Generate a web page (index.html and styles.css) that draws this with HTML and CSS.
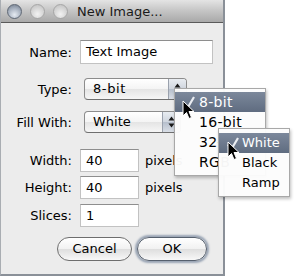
FILE: index.html
```html
<!DOCTYPE html>
<html>
<head>
<meta charset="utf-8">
<link rel="stylesheet" href="styles.css">
</head>
<body>
<div class="window">
  <div class="titlebar">
    <span class="light graphite"></span>
    <span class="light"></span>
    <span class="light"></span>
    <span class="title">New Image...</span>
  </div>
  <div class="content">
    <div class="row row-name">
      <span class="label">Name:</span>
      <div class="field field-name">Text Image</div>
    </div>
    <div class="row row-type">
      <span class="label">Type:</span>
      <div class="popup popup-type"><span class="popup-text">8-bit</span><span class="arrows"><svg width="7" height="12" viewBox="0 0 7 12"><path d="M3.5 0.5 L6.5 4.5 L0.5 4.5 Z M3.5 11.5 L6.5 7.5 L0.5 7.5 Z" fill="#1a1a1a"/></svg></span></div>
    </div>
    <div class="row row-fill">
      <span class="label">Fill With:</span>
      <div class="popup popup-fill"><span class="popup-text">White</span><span class="arrows"><svg width="7" height="12" viewBox="0 0 7 12"><path d="M3.5 0.5 L6.5 4.5 L0.5 4.5 Z M3.5 11.5 L6.5 7.5 L0.5 7.5 Z" fill="#1a1a1a"/></svg></span></div>
    </div>
    <div class="row row-width">
      <span class="label">Width:</span>
      <div class="field field-num">40</div>
      <span class="unit">pixels</span>
    </div>
    <div class="row row-height">
      <span class="label">Height:</span>
      <div class="field field-num">40</div>
      <span class="unit">pixels</span>
    </div>
    <div class="row row-slices">
      <span class="label">Slices:</span>
      <div class="field field-num">1</div>
    </div>
    <div class="buttons">
      <div class="btn btn-cancel">Cancel</div>
      <div class="btn btn-ok">OK</div>
    </div>
  </div>

  <div class="menu menu-type">
    <div class="item selected"><svg class="check" width="12" height="13" viewBox="0 0 12 13"><path d="M1 7.5 L4.5 12 L11 1" fill="none" stroke="#e9ecf1" stroke-width="2.2"/></svg>8-bit</div>
    <div class="item">16-bit</div>
    <div class="item">32-bit</div>
    <div class="item">RGB</div>
  </div>
  <div class="menu menu-fill">
    <div class="item selected"><svg class="check" width="12" height="13" viewBox="0 0 12 13"><path d="M1 7.5 L4.5 12 L11 1" fill="none" stroke="#e9ecf1" stroke-width="2.2"/></svg>White</div>
    <div class="item">Black</div>
    <div class="item">Ramp</div>
  </div>

  <svg class="cursor cursor-1" width="13" height="20" viewBox="0 0 13 20"><path d="M1 1 L1 16 L4.5 12.5 L7 18.5 L9.5 17.5 L7 11.5 L12 11.5 Z" fill="#000" stroke="#fff" stroke-width="1"/></svg>
  <svg class="cursor cursor-2" width="13" height="20" viewBox="0 0 13 20"><path d="M1 1 L1 16 L4.5 12.5 L7 18.5 L9.5 17.5 L7 11.5 L12 11.5 Z" fill="#000" stroke="#fff" stroke-width="1"/></svg>
</div>
</body>
</html>
```
FILE: styles.css
```css
html, body {
  margin: 0;
  padding: 0;
  background: #ffffff;
}
body {
  font-family: "DejaVu Sans", sans-serif;
  font-size: 13px;
  color: #000;
}
.window {
  position: relative;
  width: 222px;
  height: 274px;
  background: #ececec;
  border-left: 1px solid #a9adb2;
  border-right: 2px solid #8a9098;
  border-bottom: 2px solid #8a9098;
  box-sizing: content-box;
}
.titlebar {
  height: 22px;
  display: flex;
  align-items: center;
  padding-left: 6px;
  background: linear-gradient(#e4e4e4, #c4c4c4 50%, #a9a9a9);
  border-bottom: 1px solid #5a5a5a;
}
.light {
  width: 15px;
  height: 15px;
  border-radius: 50%;
  box-sizing: border-box;
  border: 1px solid #a6a6a6;
  background: radial-gradient(circle at 50% 70%, #f2f2f2, #d2d2d2 60%, #bdbdbd);
  margin-right: 8px;
}
.light.graphite {
  border-color: #5f6875;
  background: radial-gradient(circle at 50% 75%, #e6ebf2, #a7b1bf 55%, #6e7888);
}
.title {
  margin-left: 1px;
  font-size: 13px;
  color: #1a1a1a;
  padding-top: 1px;
}
.content {
  display: flex;
  flex-direction: column;
  padding-top: 17px;
}
.row {
  display: flex;
  align-items: center;
}
.label {
  width: 71px;
  text-align: right;
  margin-right: 8px;
  white-space: nowrap;
}
.row-type { margin-top: 14px; }
.row-fill { margin-top: 11px; }
.row-width { margin-top: 16px; }
.row-height { margin-top: 4px; }
.row-slices { margin-top: 5px; }
.field {
  box-sizing: border-box;
  height: 24px;
  background: #fff;
  border: 1px solid #c2c2c2;
  border-top-color: #8e8e8e;
  padding-left: 5px;
  line-height: 22px;
}
.field-name { width: 133px; }
.field-num { width: 59px; height: 23px; line-height: 21px; }
.unit { margin-left: 6px; }
.popup {
  box-sizing: border-box;
  height: 22px;
  margin-left: 4px;
  display: flex;
  align-items: stretch;
  border: 1px solid #8c8c8c;
  border-bottom-color: #6f6f6f;
  border-radius: 4px;
  background: linear-gradient(#ffffff, #f4f4f4 50%, #e4e4e4 51%, #f6f6f6);
  overflow: hidden;
}
.popup-type { width: 103px; }
.popup-fill { width: 97px; }
.popup-text {
  flex: 1;
  padding-left: 8px;
  line-height: 20px;
}
.popup-type .popup-text { letter-spacing: 0.6px; }
.arrows {
  width: 17px;
  display: flex;
  align-items: center;
  justify-content: center;
  border-left: 1px solid #9aa1ad;
  background: linear-gradient(#e8ecf1, #cfd5de 50%, #b6bfcc 51%, #d9dee6);
}
.buttons {
  display: flex;
  margin-top: 10px;
  padding-left: 56px;
  gap: 5px;
}
.btn {
  box-sizing: border-box;
  height: 24px;
  border-radius: 12px;
  border: 1px solid #6e6e6e;
  background: linear-gradient(#ffffff, #f1f1f1 50%, #dedede 51%, #f8f8f8);
  text-align: center;
  line-height: 22px;
}
.btn-cancel { width: 75px; }
.btn-ok {
  width: 70px;
  border-color: #56606e;
  box-shadow: 0 0 2px 2px #9aa5b5;
}
.menu {
  position: absolute;
  box-sizing: border-box;
  background: rgba(252, 252, 252, 0.97);
  border: 1px solid #a8a8a8;
  box-shadow: 1px 2px 3px rgba(0, 0, 0, 0.25);
}
.menu-type {
  left: 173px;
  top: 88px;
  width: 92px;
  padding: 3px 0;
}
.menu-fill {
  left: 217px;
  top: 128px;
  width: 72px;
  padding: 4px 0 3px;
}
.item {
  position: relative;
  height: 20px;
  line-height: 20px;
  white-space: nowrap;
  overflow: hidden;
}
.menu-type .item {
  padding-left: 24px;
  font-size: 14px;
  letter-spacing: 0.3px;
}
.menu-fill .item { padding-left: 23px; }
.item.selected {
  color: #fff;
  background: linear-gradient(#7c889b, #5f6c80);
}
.check {
  position: absolute;
  left: 8px;
  top: 4px;
}
.cursor {
  position: absolute;
}
.cursor-1 { left: 181px; top: 100px; }
.cursor-2 { left: 226px; top: 141px; }
```
